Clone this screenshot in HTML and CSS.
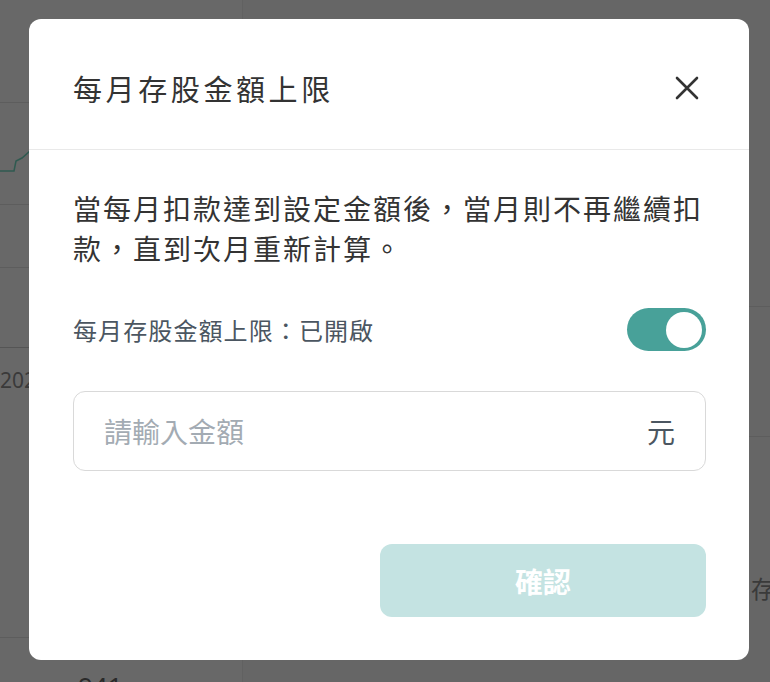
FILE: index.html
```html
<!DOCTYPE html>
<html lang="zh-Hant">
<head>
    <meta charset="UTF-8">
    <meta name="viewport" content="width=device-width, initial-scale=1.0">
    <title>每月存股金額上限</title>
    <link rel="stylesheet" href="styles.css">
</head>
<body>
    <div class="page">
        <div class="sidebar">
            <div class="side-head"></div>
            <div class="side-chart">
                <svg width="242" height="102" viewBox="0 0 242 102">
                    <polyline points="0,68 14,68 16,58 22,55 30,48 60,44 120,38 242,30" fill="none" stroke="#2f5a50" stroke-width="1.5"/>
                </svg>
            </div>
            <div class="side-row"></div>
            <div class="side-row tall"></div>
            <div class="side-year">2024</div>
            <div class="side-fill"></div>
            <div class="side-num">941</div>
        </div>
        <div class="main">
            <div class="main-top"></div>
            <div class="main-row"></div>
            <div class="main-text">存股</div>
        </div>
    </div>

    <div class="modal">
        <div class="modal-header">
            <h2 class="modal-title">每月存股金額上限</h2>
            <button class="close-btn" aria-label="關閉">
                <svg width="24" height="24" viewBox="0 0 24 24">
                    <path d="M2 2 L22 22 M22 2 L2 22" stroke="#333" stroke-width="2.6" stroke-linecap="round"/>
                </svg>
            </button>
        </div>
        <div class="modal-body">
            <p class="desc">當每月扣款達到設定金額後，當月則不再繼續扣款，直到次月重新計算。</p>
            <div class="switch-row">
                <span class="switch-label">每月存股金額上限：已開啟</span>
                <span class="switch on"><span class="knob"></span></span>
            </div>
            <div class="amount-field">
                <input type="text" placeholder="請輸入金額">
                <span class="unit">元</span>
            </div>
            <div class="actions">
                <button class="confirm-btn" disabled>確認</button>
            </div>
        </div>
    </div>
</body>
</html>
```

FILE: styles.css
```css
* {
    box-sizing: border-box;
}

body {
    margin: 0;
    height: 682px;
    overflow: hidden;
    background: #666;
    font-family: "Noto Sans CJK TC", "Noto Sans", sans-serif;
}

/* page behind the overlay */
.page {
    display: flex;
    height: 100%;
}

.sidebar {
    width: 243px;
    background: #686868;
    border-right: 1px solid #616161;
    display: flex;
    flex-direction: column;
}

.side-head {
    height: 103px;
    border-bottom: 1px solid #5d5d5d;
}

.side-chart {
    height: 102px;
    border-bottom: 1px solid #5d5d5d;
}

.side-chart svg {
    display: block;
}

.side-row {
    height: 63px;
    border-bottom: 1px solid #5d5d5d;
}

.side-row.tall {
    height: 80px;
    border-bottom-color: #555;
}

.side-year {
    padding-top: 18px;
    height: 60px;
    font-size: 21px;
    color: #3a3a3a;
    font-family: "Noto Sans", sans-serif;
}

.side-fill {
    flex: 1;
    border-bottom: 1px solid #5d5d5d;
}

.side-num {
    height: 44px;
    padding: 35px 0 0 78px;
    font-size: 26px;
    line-height: 26px;
    color: #2a2a2a;
    font-family: "Noto Sans", sans-serif;
}

.main {
    flex: 1;
    display: flex;
    flex-direction: column;
}

.main-top {
    height: 307px;
    border-bottom: 1px solid #5d5d5d;
}

.main-row {
    height: 130px;
    border-bottom: 1px solid #5d5d5d;
}

.main-text {
    padding: 133px 0 0 508px;
    font-size: 24px;
    color: #3a3a3a;
    white-space: nowrap;
}

/* modal */
.modal {
    position: absolute;
    left: 29px;
    top: 19px;
    width: 720px;
    height: 641px;
    background: #fff;
    border-radius: 12px;
}

.modal-header {
    height: 131px;
    padding: 8px 44px 0;
    display: flex;
    align-items: center;
    justify-content: space-between;
    border-bottom: 1px solid #e9e9e9;
}

.modal-title {
    margin: 0;
    font-size: 29px;
    font-weight: 400;
    letter-spacing: 3.6px;
    color: #333;
}

.close-btn {
    border: none;
    background: none;
    padding: 0;
    margin-right: 6px;
    cursor: pointer;
    display: flex;
}

.modal-body {
    padding: 38px 43px 43px 44px;
}

.desc {
    margin: 0;
    font-size: 28px;
    line-height: 40px;
    letter-spacing: 2px;
    color: #333;
}

.switch-row {
    margin-top: 40px;
    height: 43px;
    display: flex;
    align-items: center;
    justify-content: space-between;
}

.switch-label {
    font-size: 24px;
    letter-spacing: 1.1px;
    color: #4b5661;
}

.switch {
    width: 79px;
    height: 43px;
    border-radius: 22px;
    background: #c4c4c4;
    display: flex;
    align-items: center;
    padding: 0 4px;
}

.switch.on {
    background: #48a199;
    justify-content: flex-end;
}

.knob {
    width: 36px;
    height: 36px;
    border-radius: 50%;
    background: #fff;
}

.amount-field {
    margin-top: 40px;
    height: 80px;
    border: 1px solid #d9d9d9;
    border-radius: 12px;
    display: flex;
    align-items: center;
    padding: 0 30px;
}

.amount-field input {
    flex: 1;
    border: none;
    outline: none;
    font-family: inherit;
    font-size: 28px;
    color: #333;
    background: transparent;
    padding: 0;
}

.amount-field input::placeholder {
    color: #a3abb3;
}

.unit {
    font-size: 28px;
    color: #4b5661;
}

.actions {
    margin-top: 73px;
    display: flex;
    justify-content: flex-end;
}

.confirm-btn {
    width: 326px;
    height: 73px;
    border: none;
    border-radius: 12px;
    background: #c4e3e2;
    color: #fff;
    font-family: inherit;
    font-size: 28px;
    font-weight: 700;
}
```
